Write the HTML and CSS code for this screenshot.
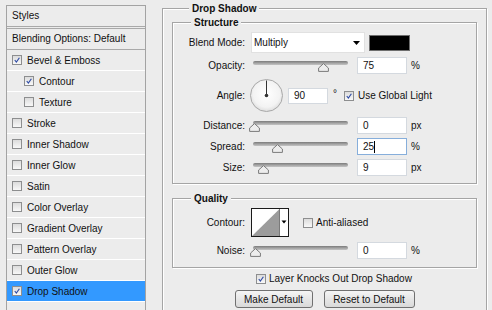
FILE: index.html
```html
<!DOCTYPE html>
<html>
<head>
<meta charset="utf-8">
<title>Layer Style - Drop Shadow</title>
<link rel="stylesheet" href="styles.css">
</head>
<body>
<div class="dialog">
  <div class="styles-panel">
    <div class="panel-head">Styles</div>
    <div class="panel-blend">Blending Options: Default</div>
    <div class="item"><span class="cb"><svg viewBox="0 0 10 10"><polyline points="2.2,5 4.2,7.6 8,2.2"/></svg></span>Bevel &amp; Emboss</div>
    <div class="item sub"><span class="cb"><svg viewBox="0 0 10 10"><polyline points="2.2,5 4.2,7.6 8,2.2"/></svg></span>Contour</div>
    <div class="item sub"><span class="cb"></span>Texture</div>
    <div class="item"><span class="cb"></span>Stroke</div>
    <div class="item"><span class="cb"></span>Inner Shadow</div>
    <div class="item"><span class="cb"></span>Inner Glow</div>
    <div class="item"><span class="cb"></span>Satin</div>
    <div class="item"><span class="cb"></span>Color Overlay</div>
    <div class="item"><span class="cb"></span>Gradient Overlay</div>
    <div class="item"><span class="cb"></span>Pattern Overlay</div>
    <div class="item"><span class="cb"></span>Outer Glow</div>
    <div class="item active"><span class="cb"><svg viewBox="0 0 10 10"><polyline points="2.2,5 4.2,7.6 8,2.2"/></svg></span>Drop Shadow</div>
  </div>

  <div class="settings">
    <div class="group outer">
      <div class="legend">Drop Shadow</div>

      <div class="group inner structure">
        <div class="legend">Structure</div>

        <div class="row row-blend">
          <div class="label">Blend Mode:</div>
          <div class="select">
            <span class="select-text">Multiply</span>
            <svg class="select-arrow" viewBox="0 0 7 4"><polygon points="0,0 7,0 3.5,4"/></svg>
          </div>
          <div class="swatch"></div>
        </div>

        <div class="row row-slider">
          <div class="label">Opacity:</div>
          <div class="slider">
            <div class="track"></div>
            <svg class="thumb" style="left:69px" viewBox="0 0 11 9"><path d="M5.5 0.6 L10.4 5 L10.4 8.4 L0.6 8.4 L0.6 5 Z"/></svg>
          </div>
          <div class="field">75</div>
          <div class="unit">%</div>
        </div>

        <div class="row row-angle">
          <div class="label">Angle:</div>
          <svg class="dial" viewBox="0 0 33 33">
            <defs>
              <radialGradient id="dialfill" cx="50%" cy="45%" r="55%">
                <stop offset="0" stop-color="#ffffff"/>
                <stop offset="0.75" stop-color="#f3f3f3"/>
                <stop offset="1" stop-color="#dedede"/>
              </radialGradient>
            </defs>
            <circle cx="16.5" cy="16.5" r="16" fill="url(#dialfill)" stroke="#a8a8a8" stroke-width="1"/>
            <line x1="16.5" y1="16.5" x2="16.5" y2="1.5" stroke="#333" stroke-width="1"/>
            <circle cx="16.5" cy="16.5" r="1.8" fill="#333"/>
          </svg>
          <div class="field field-angle">90</div>
          <div class="degree">°</div>
          <span class="cb cb-global"><svg viewBox="0 0 10 10"><polyline points="2.2,5 4.2,7.6 8,2.2"/></svg></span>
          <div class="cb-text">Use Global Light</div>
        </div>

        <div class="row row-slider row-distance">
          <div class="label">Distance:</div>
          <div class="slider">
            <div class="track"></div>
            <svg class="thumb" style="left:0px" viewBox="0 0 11 9"><path d="M5.5 0.6 L10.4 5 L10.4 8.4 L0.6 8.4 L0.6 5 Z"/></svg>
          </div>
          <div class="field">0</div>
          <div class="unit">px</div>
        </div>

        <div class="row row-slider">
          <div class="label">Spread:</div>
          <div class="slider">
            <div class="track"></div>
            <svg class="thumb" style="left:23px" viewBox="0 0 11 9"><path d="M5.5 0.6 L10.4 5 L10.4 8.4 L0.6 8.4 L0.6 5 Z"/></svg>
          </div>
          <div class="field focused">25<span class="caret"></span></div>
          <div class="unit">%</div>
        </div>

        <div class="row row-slider">
          <div class="label">Size:</div>
          <div class="slider">
            <div class="track"></div>
            <svg class="thumb" style="left:9px" viewBox="0 0 11 9"><path d="M5.5 0.6 L10.4 5 L10.4 8.4 L0.6 8.4 L0.6 5 Z"/></svg>
          </div>
          <div class="field">9</div>
          <div class="unit">px</div>
        </div>
      </div>

      <div class="group inner quality">
        <div class="legend">Quality</div>

        <div class="row row-contour">
          <div class="label">Contour:</div>
          <svg class="contour" viewBox="0 0 38 29">
            <rect x="0.5" y="0.5" width="37" height="28" fill="#ffffff" stroke="#1a1a1a"/>
            <polygon points="1,28 28.5,1 28.5,28" fill="#9c9c9c"/>
            <line x1="28.5" y1="1" x2="28.5" y2="28" stroke="#7a7a7a"/>
            <polygon points="30.5,12.5 35.5,12.5 33,15.5" fill="#000"/>
          </svg>
          <span class="cb cb-anti"></span>
          <div class="cb-text cb-anti-text">Anti-aliased</div>
        </div>

        <div class="row row-slider row-noise">
          <div class="label">Noise:</div>
          <div class="slider">
            <div class="track"></div>
            <svg class="thumb" style="left:1px" viewBox="0 0 11 9"><path d="M5.5 0.6 L10.4 5 L10.4 8.4 L0.6 8.4 L0.6 5 Z"/></svg>
          </div>
          <div class="field">0</div>
          <div class="unit">%</div>
        </div>
      </div>

      <div class="knock">
        <span class="cb"><svg viewBox="0 0 10 10"><polyline points="2.2,5 4.2,7.6 8,2.2"/></svg></span>
        <div class="cb-text">Layer Knocks Out Drop Shadow</div>
      </div>

      <div class="buttons">
        <div class="button btn-make">Make Default</div>
        <div class="button btn-reset">Reset to Default</div>
      </div>
    </div>
  </div>
</div>
</body>
</html>
```

FILE: styles.css
```css
html, body {
  margin: 0;
  padding: 0;
}

body {
  width: 492px;
  height: 310px;
  overflow: hidden;
  background: #ececec;
  font-family: "Liberation Sans", Arial, sans-serif;
  font-size: 10px;
  color: #111;
}

.dialog {
  display: flex;
  align-items: flex-start;
  padding: 5px 0 0 6px;
}

/* ---------- Left styles list ---------- */
.styles-panel {
  width: 138px;
  height: 304px;
  border: 1px solid #a3a3a3;
  border-bottom: none;
  background: #ececec;
  flex: none;
}

.panel-head {
  height: 20px;
  line-height: 20px;
  padding-left: 5px;
  border-bottom: 1px solid #a9a9a9;
}

.panel-blend {
  margin-top: 1px;
  height: 20px;
  line-height: 20px;
  padding-left: 5px;
  border-top: 1px solid #a9a9a9;
  border-bottom: 1px solid #a9a9a9;
}

.item {
  height: 20px;
  display: flex;
  align-items: center;
  padding-left: 5px;
  border-bottom: 1px solid #ffffff;
}

.item.sub {
  padding-left: 17px;
}

.item.active {
  background: #3399ff;
}

.cb {
  width: 10px;
  height: 10px;
  box-sizing: border-box;
  border: 1px solid #8d8e8f;
  background: linear-gradient(#dcdcdc, #f8f8f8);
  flex: none;
  display: block;
}

.cb svg {
  display: block;
  width: 8px;
  height: 8px;
}

.cb polyline {
  fill: none;
  stroke: #2d4aa5;
  stroke-width: 1.4;
}

.item .cb {
  margin-right: 5px;
}

/* ---------- Right settings ---------- */
.settings {
  margin-left: 16px;
  flex: none;
}

.group {
  border: 1px solid #a5a5a5;
  box-shadow: inset 1px 1px 0 #ffffff, 1px 1px 0 #ffffff;
}

.legend {
  width: max-content;
  height: 13px;
  line-height: 13px;
  margin: -7px 0 0 17px;
  padding: 0 3px;
  background: #ececec;
  font-weight: bold;
}

.group.outer {
  margin-top: 3px;
  width: 305px;
  height: 301px;
  padding: 0 9px;
  border-bottom: none;
}

.group.inner .legend {
  margin-left: 18px;
}

.structure {
  margin-top: 7px;
  padding-bottom: 7px;
}

.quality {
  margin-top: 14px;
  padding-bottom: 8px;
}

.row {
  display: flex;
  align-items: center;
}

.label {
  width: 72px;
  text-align: right;
  flex: none;
}

.row-blend {
  margin-top: 3px;
  height: 21px;
}

.select {
  margin-left: 6px;
  width: 114px;
  height: 21px;
  box-sizing: border-box;
  border: 1px solid #e1e1e1;
  background: #ffffff;
  display: flex;
  align-items: center;
  padding-left: 2px;
}

.select-text {
  flex: 1;
}

.select-arrow {
  width: 7px;
  height: 4px;
  margin-right: 4px;
  fill: #000;
}

.swatch {
  margin-left: 4px;
  width: 41px;
  height: 16px;
  box-sizing: border-box;
  border: 1px solid #6e6e6e;
  background: #000;
}

.row-slider {
  margin-top: 4px;
  height: 17px;
}

.row-distance {
  margin-top: 5px;
}

.slider {
  position: relative;
  margin-left: 4px;
  width: 103px;
  height: 17px;
  flex: none;
}

.track {
  margin: 4px 4px 0;
  height: 4px;
  box-sizing: border-box;
  border-radius: 2px;
  background: linear-gradient(#7b7b7b, #a9a9a9 60%, #c4c4c4);
}

.thumb {
  position: absolute;
  top: 6px;
  width: 11px;
  height: 9px;
}

.thumb path {
  fill: #ededed;
  stroke: #7a7a7a;
  stroke-width: 1;
}

.field {
  margin-left: 5px;
  width: 50px;
  height: 17px;
  box-sizing: border-box;
  border: 1px solid #d4d9df;
  background: #ffffff;
  padding-left: 5px;
  display: flex;
  align-items: center;
  flex: none;
}

.field.focused {
  border-color: #86aedb;
}

.caret {
  width: 1px;
  height: 12px;
  background: #000;
}

.unit {
  margin-left: 4px;
}

.row-angle {
  margin-top: 5px;
  height: 33px;
}

.dial {
  margin-left: 5px;
  width: 33px;
  height: 33px;
  flex: none;
}

.field-angle {
  width: 40px;
  height: 16px;
}

.degree {
  margin-left: 5px;
  align-self: flex-start;
  margin-top: 10px;
  line-height: 10px;
}

.cb-global {
  margin-left: 7px;
}

.cb-text {
  margin-left: 4px;
}

.row-contour {
  margin-top: 3px;
  height: 29px;
}

.contour {
  margin-left: 6px;
  width: 38px;
  height: 29px;
  flex: none;
}

.cb-anti {
  margin-left: 14px;
}

.cb-anti-text {
  margin-left: 3px;
}

.row-noise {
  margin-top: 5px;
}

.knock {
  display: flex;
  align-items: center;
  height: 13px;
  margin-top: 4px;
  margin-left: 84px;
}

.knock .cb-text {
  margin-left: 3px;
}

.buttons {
  display: flex;
  justify-content: center;
  gap: 11px;
  margin-top: 5px;
}

.button {
  height: 18px;
  box-sizing: border-box;
  border: 1px solid #707070;
  border-radius: 3px;
  background: linear-gradient(#f5f5f5, #e6e6e6 50%, #d9d9d9);
  display: flex;
  align-items: center;
  justify-content: center;
}

.btn-make {
  width: 78px;
}

.btn-reset {
  width: 91px;
}
```
